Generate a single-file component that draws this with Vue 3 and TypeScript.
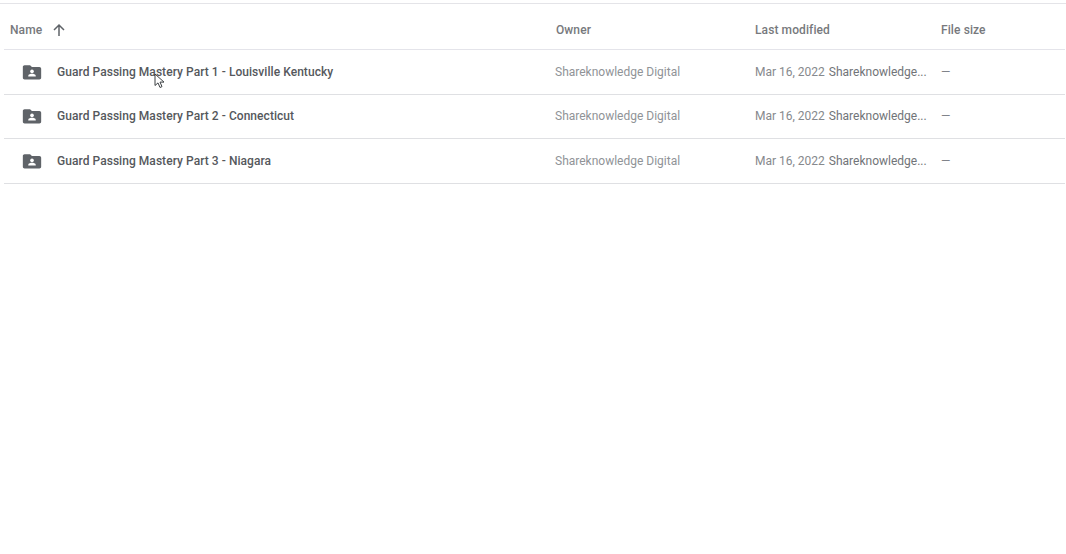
<script setup lang="ts">
interface Row { name: string }
const rows: Row[] = [
  { name: 'Guard Passing Mastery Part 1 - Louisville Kentucky' },
  { name: 'Guard Passing Mastery Part 2 - Connecticut' },
  { name: 'Guard Passing Mastery Part 3 - Niagara' },
]
</script>

<template>
  <div class="page">
    <div class="topline"></div>
    <div class="head">
      <div class="c-name h-name">
        <span>Name</span>
        <svg class="arrow" width="16" height="16" viewBox="0 0 16 16">
          <path d="M8 14V3.2M3 8l5-5 5 5" fill="none" stroke="#5f6368" stroke-width="1.5" />
        </svg>
      </div>
      <div class="c-owner h-owner">Owner</div>
      <div class="c-mod h-mod">Last modified</div>
      <div class="c-size">File size</div>
    </div>
    <div v-for="r in rows" :key="r.name" class="row">
      <div class="c-name r-name">
        <svg class="folder" width="22" height="22" viewBox="0 0 24 24">
          <path fill="#5f6368" d="M3.9 4.5h6l2 2h8.2c1 0 1.9.9 1.9 1.9v10c0 1-.9 1.9-1.9 1.9H3.900c-1 0-1.900-.9-1.900-1.900V6.400c0-1 .9-1.900 1.900-1.900z" />
          <circle cx="12" cy="11.400" r="2" fill="#fff" />
          <path fill="#fff" d="M7.900 17v-1c0-1.400 2.700-2.100 4.100-2.100s4.100.7 4.100 2.100v1z" />
        </svg>
        <span class="title">{{ r.name }}</span>
      </div>
      <div class="c-owner r-owner">Shareknowledge Digital</div>
      <div class="c-mod r-mod"><span class="date">Mar 16, 2022</span><span class="by">Shareknowledge...</span></div>
      <div class="c-size r-size">—</div>
    </div>
    <svg class="cursor" width="12" height="16" viewBox="0 0 12 16">
      <path d="M1 1v11.500l3-2.600 2 4.600 2-.9-2-4.500h4z" fill="#fff" stroke="#3c4043" stroke-width="1" />
    </svg>
  </div>
</template>

<style>
html, body { margin: 0; background: #fff; }
</style>

<style scoped>
.page {
  position: relative;
  width: 1066px;
  height: 554px;
  overflow: hidden;
  background: #fff;
  font-family: Roboto, "Liberation Sans", sans-serif;
  font-size: 12px;
  box-sizing: border-box;
  padding-top: 3px;
}
.topline { height: 1px; background: #e4e4e8; }
.head {
  display: flex;
  align-items: center;
  height: 39px;
  padding-top: 6px;
  border-bottom: 1px solid #e4e4ea;
  margin-left: 4px;
  margin-right: 1px;
  color: #77797d;
  font-weight: 500;
  letter-spacing: 0.1px;
}
.row {
  display: flex;
  align-items: center;
  height: 43.125px;
  padding-top: 0.375px;
  border-bottom: 1px solid #dfe0e3;
  margin-left: 4px;
  margin-right: 1px;
}
.c-name { width: 551px; display: flex; align-items: center; flex: none; }
.c-owner { width: 200px; flex: none; }
.c-mod { width: 186px; flex: none; display: flex; align-items: center; }
.c-size { flex: 1; }
.h-name { padding-left: 6px; box-sizing: border-box; }
.arrow { margin-left: 9px; }
.h-owner { padding-left: 1px; box-sizing: border-box; }
.r-name { padding-left: 17px; box-sizing: border-box; }
.folder { flex: none; }
.title { margin-left: 14px; color: #55585c; font-weight: 500; letter-spacing: 0.05px; white-space: nowrap; }
.r-owner { color: #909397; }
.date { color: #86898d; }
.by { margin-left: 4px; color: #717478; }
.r-size { color: #80838a; }
.cursor { position: absolute; left: 154px; top: 73px; }
</style>
